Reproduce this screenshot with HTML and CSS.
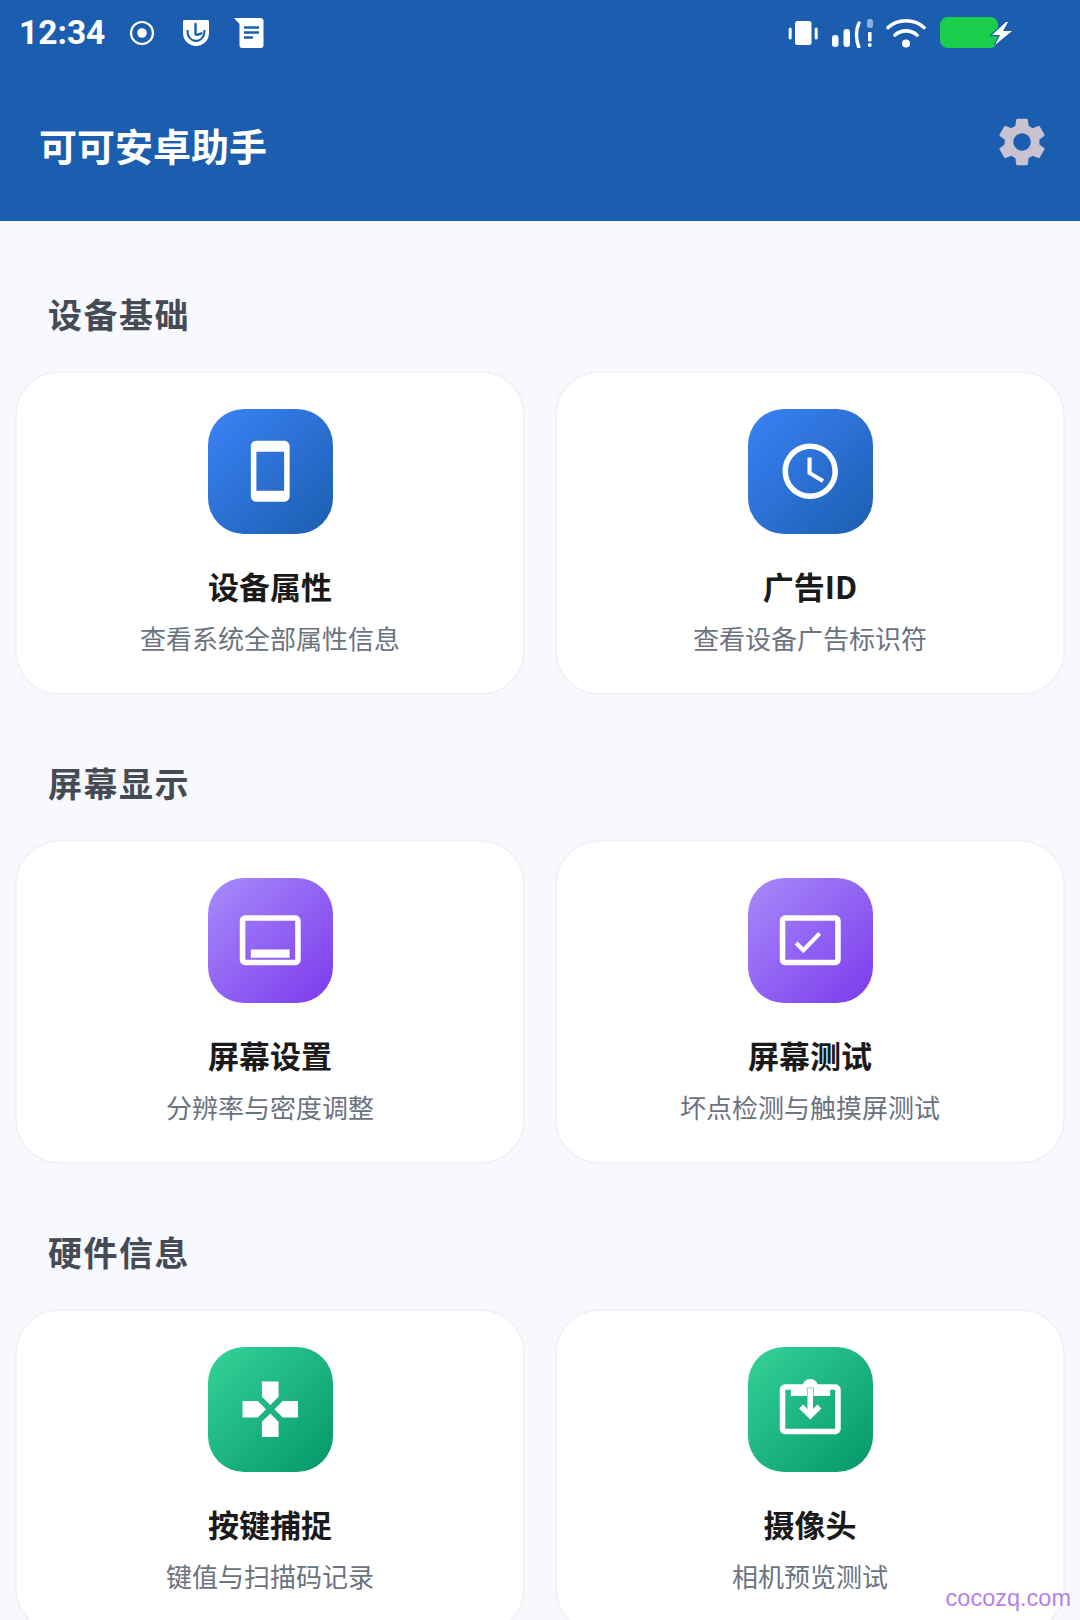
FILE: index.html
```html
<!DOCTYPE html>
<html lang="zh-CN">
<head>
    <meta charset="UTF-8">
    <meta name="viewport" content="width=device-width, initial-scale=1.0">
    <title>可可安卓助手</title>
    <link rel="stylesheet" href="styles.css">
</head>
<body>
    <div class="screen">
        <header class="app-header">
            <div class="status-bar">
                <div class="status-left">
                    <span class="clock">12:34</span>
                    <svg class="st-record" viewBox="0 0 26 26"><circle cx="13" cy="13" r="11" fill="none" stroke="#fff" stroke-width="2.2"/><circle cx="13" cy="13" r="4.8" fill="#fff"/></svg>
                    <svg class="st-shield" viewBox="0 0 28 28"><path d="M1 2.5C1 1.4 1.900 1 3 1h22c1.100 0 2 .4 2 1.500V14c0 7.500-6 13-13 13S1 21.500 1 14z" fill="#fff"/><path d="M13.500 5v9.500c0 1 .7 1.500 1.600 1.300l4.400-1.500" fill="none" stroke="#1b5eb0" stroke-width="2.400" stroke-linecap="round"/><path d="M5.500 11c-.6 6 3.500 11 8.500 11s9-5 8.500-11" fill="none" stroke="#1b5eb0" stroke-width="2"/></svg>
                    <svg class="st-note" viewBox="0 0 30 30"><path d="M0 0h26.500C28 0 29.500 1 29.500 2.500v25c0 1.500-1 2.500-2.500 2.500H8c-1.500 0-2.500-1-2.500-2.500V6z" fill="#fff"/><path d="M10 9.500h15M10 14.500h15M10 19.500h9" stroke="#1b5eb0" stroke-width="2.600"/></svg>
                </div>
                <div class="status-right">
                    <svg class="st-vibrate" viewBox="0 0 30 26"><rect x="7" y="1" width="16.500" height="24" rx="2.500" fill="#fff"/><rect x="0.700" y="7.500" width="3" height="12" rx="1.500" fill="#fff"/><rect x="26.700" y="7.500" width="3" height="12" rx="1.500" fill="#fff"/></svg>
                    <svg class="st-signal" viewBox="0 0 42 30"><rect x="0" y="17" width="6.500" height="12" rx="3" fill="#fff"/><rect x="11.500" y="11" width="6.500" height="18" rx="3" fill="#fff"/><path d="M27 5c-3 6-3.500 16-.2 24" fill="none" stroke="#fff" stroke-width="3.400" stroke-linecap="round"/><rect x="35" y="1" width="6" height="9" rx="2.500" fill="#fff" opacity=".5"/><rect x="36" y="14" width="3.600" height="9.500" rx="1" fill="#fff"/><circle cx="37.800" cy="27" r="2" fill="#fff"/></svg>
                    <svg class="st-wifi" viewBox="0 0 40 30"><path d="M2 9.500C12 .5 28 .5 38 9.500M9 17c6.500-5.500 15.500-5.500 22 0" fill="none" stroke="#fff" stroke-width="3.600" stroke-linecap="round"/><circle cx="20" cy="25.500" r="4" fill="#fff"/></svg>
                    <svg class="st-battery" viewBox="0 0 74 32"><rect x="0" y="0" width="58" height="31" rx="8" fill="#1bce4b"/><path d="M66 5 52 18h8l-5 10 17-14h-9l5-9z" fill="#fff" stroke="#1b5eb0" stroke-width="2.400" paint-order="stroke"/></svg>
                </div>
            </div>
            <div class="toolbar">
                <h1 class="app-title">可可安卓助手</h1>
                <svg class="gear" viewBox="0 0 24 24"><path d="M19.140 12.940c.04-.3.06-.61.06-.94 0-.32-.02-.64-.07-.94l2.030-1.580a.49.49 0 0 0 .12-.61l-1.920-3.320a.488.488 0 0 0-.59-.22l-2.390.96c-.5-.38-1.030-.7-1.620-.94l-.36-2.540a.484.484 0 0 0-.48-.41h-3.840c-.24 0-.43.17-.47.41l-.36 2.540c-.59.24-1.130.57-1.620.94l-2.390-.96c-.22-.08-.47 0-.59.22L2.740 8.870c-.12.21-.08.47.12.61l2.030 1.580c-.05.3-.09.63-.09.94s.02.64.07.94l-2.030 1.580a.49.49 0 0 0-.12.61l1.920 3.320c.12.22.37.29.59.22l2.390-.96c.5.38 1.030.7 1.620.94l.36 2.540c.05.24.24.41.48.41h3.840c.24 0 .44-.17.47-.41l.36-2.540c.59-.24 1.130-.56 1.620-.94l2.390.96c.22.08.47 0 .59-.22l1.920-3.320c.12-.22.07-.47-.12-.61l-2.010-1.580zM12 15.600c-1.980 0-3.600-1.620-3.600-3.600s1.620-3.600 3.600-3.600 3.600 1.620 3.600 3.600-1.620 3.600-3.600 3.600z"/></svg>
            </div>
        </header>

        <main class="content">
            <section class="group">
                <h2 class="group-title">设备基础</h2>
                <div class="card-grid">
                    <div class="card">
                        <div class="tile tile-blue">
                            <svg viewBox="0 0 24 24"><path d="M17 1.010 7 1c-1.100 0-2 .9-2 2v18c0 1.100.9 2 2 2h10c1.100 0 2-.9 2-2V3c0-1.100-.9-1.990-2-1.990zM17 19H7V5h10v14z"/></svg>
                        </div>
                        <div class="card-name">设备属性</div>
                        <div class="card-desc">查看系统全部属性信息</div>
                    </div>
                    <div class="card">
                        <div class="tile tile-blue">
                            <svg viewBox="0 0 24 24"><path d="M11.990 2C6.470 2 2 6.480 2 12s4.470 10 9.990 10C17.520 22 22 17.520 22 12S17.520 2 11.990 2zM12 20c-4.420 0-8-3.580-8-8s3.580-8 8-8 8 3.580 8 8-3.580 8-8 8zm.5-13H11v6l5.250 3.150.75-1.230-4.500-2.670z"/></svg>
                        </div>
                        <div class="card-name">广告ID</div>
                        <div class="card-desc">查看设备广告标识符</div>
                    </div>
                </div>
            </section>

            <section class="group">
                <h2 class="group-title">屏幕显示</h2>
                <div class="card-grid">
                    <div class="card">
                        <div class="tile tile-purple">
                            <svg viewBox="0 0 24 24"><path d="M21 3H3C1.900 3 1 3.900 1 5v14c0 1.100.9 2 2 2h18c1.100 0 2-.9 2-2V5c0-1.100-.9-2-2-2zm0 16H3V5h18v14zM5 15.300h14v3H5z"/></svg>
                        </div>
                        <div class="card-name">屏幕设置</div>
                        <div class="card-desc">分辨率与密度调整</div>
                    </div>
                    <div class="card">
                        <div class="tile tile-purple">
                            <svg viewBox="0 0 24 24"><path d="M21 3H3C1.900 3 1 3.900 1 5v14c0 1.100.9 2 2 2h18c1.100 0 2-.9 2-2V5c0-1.100-.9-2-2-2zm0 16H3V5h18v14z"/><path class="check" d="M6.900 13 9.500 15.600 15.400 9.500"/></svg>
                        </div>
                        <div class="card-name">屏幕测试</div>
                        <div class="card-desc">坏点检测与触摸屏测试</div>
                    </div>
                </div>
            </section>

            <section class="group">
                <h2 class="group-title">硬件信息</h2>
                <div class="card-grid">
                    <div class="card">
                        <div class="tile tile-green">
                            <svg viewBox="0 0 24 24"><path d="M15 7.500V2H9v5.500l3 3 3-3zM7.500 9H2v6h5.500l3-3-3-3zM9 16.500V22h6v-5.500l-3-3-3 3zM16.500 9l-3 3 3 3H22V9h-5.500z"/></svg>
                        </div>
                        <div class="card-name">按键捕捉</div>
                        <div class="card-desc">键值与扫描码记录</div>
                    </div>
                    <div class="card">
                        <div class="tile tile-green">
                            <svg viewBox="0 0 24 24">
                                <path d="M21 3H3C1.900 3 1 3.900 1 5v14c0 1.100.9 2 2 2h18c1.100 0 2-.9 2-2V5c0-1.100-.9-2-2-2zm0 16H3V5h18v14z"/>
                                <path d="M5 4.800h14.200v2.400H5z"/>
                                <circle cx="12" cy="3.900" r="2.800"/>
                                <path class="stem-gap" d="M12 7.200V4.200"/>
                                <path class="arrow" d="M12 4.400V14M8.700 11 12 14.300 15.300 11"/>
                            </svg>
                        </div>
                        <div class="card-name">摄像头</div>
                        <div class="card-desc">相机预览测试</div>
                    </div>
                </div>
            </section>
        </main>

        <div class="watermark">cocozq.com</div>
    </div>
</body>
</html>
```

FILE: styles.css
```css
* {
    box-sizing: border-box;
}
html, body {
    margin: 0;
    height: 100%;
}
body {
    background-color: #f8f9fe;
    font-family: "Noto Sans CJK SC", "Noto Sans", sans-serif;
    overflow: hidden;
}
.screen {
    position: relative;
    height: 1620px;
    overflow: hidden;
}

/* Header */
.app-header {
    background-color: #1b5eb0;
    height: 221px;
    color: #ffffff;
}
.status-bar {
    display: flex;
    justify-content: space-between;
    align-items: center;
    height: 66px;
    padding: 0 66px 0 19px;
}
.status-left, .status-right {
    display: flex;
    align-items: center;
}
.clock {
    font-family: Roboto, sans-serif;
    font-size: 33.500px;
    font-weight: 700;
    line-height: 1;
    width: 110px;
}
.st-record {
    width: 26px;
    height: 26px;
    margin-right: 27px;
}
.st-shield {
    width: 28px;
    height: 28px;
    margin-right: 24px;
}
.st-note {
    width: 30px;
    height: 30px;
}
.st-vibrate {
    width: 30px;
    height: 26px;
    margin-right: 14px;
}
.st-signal {
    width: 42px;
    height: 30px;
    margin-right: 12px;
}
.st-wifi {
    width: 40px;
    height: 30px;
    margin-right: 14px;
}
.st-battery {
    width: 74px;
    height: 32px;
}
.toolbar {
    display: flex;
    justify-content: space-between;
    align-items: center;
    height: 155px;
    padding: 0 29px 0 39px;
}
.app-title {
    margin: 0 0 -3px;
    font-size: 38px;
    font-weight: 700;
    line-height: 50px;
}
.gear {
    width: 58px;
    height: 58px;
    margin-bottom: 3px;
    fill: #c9c2d0;
}

/* Sections */
.content {
    display: flex;
    flex-direction: column;
    gap: 65px;
    padding: 70px 15px 0;
}
.group-title {
    margin: 0 0 34px 33px;
    font-size: 34px;
    font-weight: 700;
    line-height: 46px;
    letter-spacing: 1.500px;
    color: #454b54;
}
.card-grid {
    display: grid;
    grid-template-columns: 1fr 1fr;
    gap: 30px;
}
.card {
    display: flex;
    flex-direction: column;
    align-items: center;
    height: 324px;
    padding-top: 36px;
    background-color: #ffffff;
    border: 2px solid #f1f2f6;
    border-radius: 44px;
}
.tile {
    display: flex;
    justify-content: center;
    align-items: center;
    width: 125px;
    height: 125px;
    border-radius: 36px;
}
.tile svg {
    width: 66.500px;
    height: 66.500px;
    fill: #ffffff;
}
.tile-blue {
    background: linear-gradient(135deg, #3b82f6, #1b5eb0);
}
.tile-purple {
    background: linear-gradient(135deg, #a78bfa, #7c3aed);
}
.tile-green {
    background: linear-gradient(135deg, #34d399, #059669);
}
.check {
    fill: none;
    stroke: #ffffff;
    stroke-width: 1.500;
}
.stem-gap {
    fill: none;
    stroke: #22b784;
    stroke-width: 2.400;
}
.arrow {
    fill: none;
    stroke: #ffffff;
    stroke-width: 2;
}
.card-name {
    margin-top: 31px;
    font-size: 31px;
    font-weight: 700;
    line-height: 42px;
    color: #1a1a1a;
}
.card-desc {
    margin-top: 13px;
    font-size: 26px;
    line-height: 36px;
    color: #6b7280;
}
.watermark {
    position: absolute;
    right: 9px;
    bottom: 8px;
    font-family: "Liberation Sans", Arial, sans-serif;
    font-size: 23.500px;
    line-height: 28px;
    color: #b77fee;
}
```
